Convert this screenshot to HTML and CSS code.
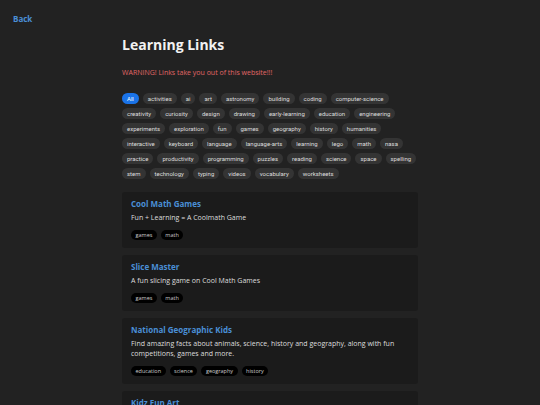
FILE: index.html
```html
<!DOCTYPE html>
<html>
<head>
    <meta charset="UTF-8">
    <title>Learning Links</title>
    <!-- Styling for the links page -->
    <link rel="stylesheet" href="styles.css">
</head>
<body>
    <div class="top-bar">
        <a class="back-link" href="#">Back</a>
    </div>
    <main class="page">
        <h1>Learning Links</h1>
        <p class="warning">WARNING! Links take you out of this website!!!</p>

        <!-- tag filter, "All" is selected -->
        <div class="filters">
            <span class="filter active">All</span>
            <span class="filter">activities</span>
            <span class="filter">ai</span>
            <span class="filter">art</span>
            <span class="filter">astronomy</span>
            <span class="filter">building</span>
            <span class="filter">coding</span>
            <span class="filter">computer-science</span>
            <span class="filter">creativity</span>
            <span class="filter">curiosity</span>
            <span class="filter">design</span>
            <span class="filter">drawing</span>
            <span class="filter">early-learning</span>
            <span class="filter">education</span>
            <span class="filter">engineering</span>
            <span class="filter">experiments</span>
            <span class="filter">exploration</span>
            <span class="filter">fun</span>
            <span class="filter">games</span>
            <span class="filter">geography</span>
            <span class="filter">history</span>
            <span class="filter">humanities</span>
            <span class="filter">interactive</span>
            <span class="filter">keyboard</span>
            <span class="filter">language</span>
            <span class="filter">language-arts</span>
            <span class="filter">learning</span>
            <span class="filter">lego</span>
            <span class="filter">math</span>
            <span class="filter">nasa</span>
            <span class="filter">practice</span>
            <span class="filter">productivity</span>
            <span class="filter">programming</span>
            <span class="filter">puzzles</span>
            <span class="filter">reading</span>
            <span class="filter">science</span>
            <span class="filter">space</span>
            <span class="filter">spelling</span>
            <span class="filter">stem</span>
            <span class="filter">technology</span>
            <span class="filter">typing</span>
            <span class="filter">videos</span>
            <span class="filter">vocabulary</span>
            <span class="filter">worksheets</span>
        </div>

        <div class="link-list">
            <div class="link-card">
                <a class="link-title" href="#">Cool Math Games</a>
                <p class="link-desc">Fun + Learning = A Coolmath Game</p>
                <div class="link-tags">
                    <span class="tag">games</span>
                    <span class="tag">math</span>
                </div>
            </div>
            <div class="link-card">
                <a class="link-title" href="#">Slice Master</a>
                <p class="link-desc">A fun slicing game on Cool Math Games</p>
                <div class="link-tags">
                    <span class="tag">games</span>
                    <span class="tag">math</span>
                </div>
            </div>
            <div class="link-card">
                <a class="link-title" href="#">National Geographic Kids</a>
                <p class="link-desc">Find amazing facts about animals, science, history and geography, along with fun competitions, games and more.</p>
                <div class="link-tags">
                    <span class="tag">education</span>
                    <span class="tag">science</span>
                    <span class="tag">geography</span>
                    <span class="tag">history</span>
                </div>
            </div>
            <div class="link-card">
                <a class="link-title" href="#">Kidz Fun Art</a>
                <p class="link-desc">Step by step drawing lessons for kids.</p>
                <div class="link-tags">
                    <span class="tag">art</span>
                    <span class="tag">drawing</span>
                </div>
            </div>
        </div>
    </main>
</body>
</html>
```

FILE: styles.css
```css
body {
    background-color: #222222;
    color: #dddddd;
    font-family: "Open Sans", sans-serif;
    margin: 0;
}
a {
    text-decoration: none;
}
.top-bar {
    padding: 14px 13px 0;
}
.back-link {
    color: #4a8fd6;
    font-size: 8px;
    font-weight: bold;
    line-height: 10px;
    display: block;
}
.page {
    width: 296px;
    margin: 0 auto;
}
h1 {
    color: #f2f2f2;
    font-size: 14px;
    font-weight: bold;
    line-height: 20px;
    margin: 11px 0 0;
}
.warning {
    color: #e06666;
    font-size: 7px;
    line-height: 10px;
    margin: 13px 0 0;
}
.filters {
    display: flex;
    flex-wrap: wrap;
    gap: 4px 4px;
    margin-top: 15px;
}
.filter {
    background-color: #343434;
    color: #dddddd;
    font-family: Roboto, sans-serif;
    font-size: 6px;
    line-height: 11px;
    padding: 0 5px;
    border-radius: 6px;
}
.filter.active {
    background-color: #1a73e8;
    color: #ffffff;
}
.link-list {
    display: flex;
    flex-direction: column;
    gap: 7px;
    margin-top: 13px;
}
.link-card {
    background-color: #1b1b1b;
    border-radius: 3px;
    padding: 7px 9px 8px;
}
.link-title {
    color: #4a8fd6;
    font-size: 8px;
    font-weight: bold;
    line-height: 10px;
    display: block;
}
.link-desc {
    font-size: 7px;
    line-height: 10px;
    margin: 4px 0 0;
}
.link-tags {
    display: flex;
    gap: 4px;
    margin-top: 7px;
}
.tag {
    background-color: #000000;
    color: #cccccc;
    font-size: 5.5px;
    line-height: 10px;
    padding: 0 4.5px;
    border-radius: 5px;
}
```
